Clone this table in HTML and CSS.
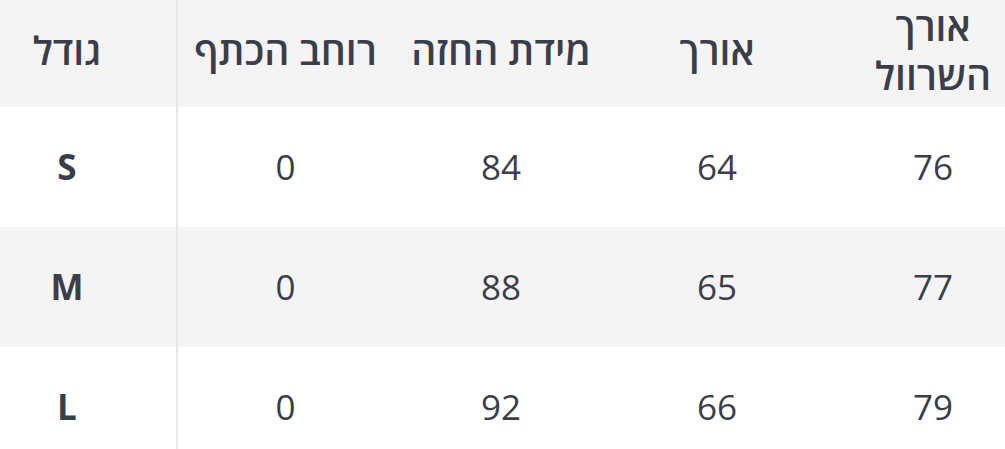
FILE: index.html
```html
<!DOCTYPE html>
<html lang="he">
<head>
<meta charset="utf-8">
<link rel="stylesheet" href="styles.css">
</head>
<body>
<table class="size-table">
  <colgroup>
    <col class="col-size">
    <col class="col-data">
    <col class="col-data">
    <col class="col-data">
    <col class="col-data">
  </colgroup>
  <thead>
    <tr class="row head">
      <th class="cell first" dir="rtl">גודל</th>
      <th class="cell" dir="rtl">רוחב הכתף</th>
      <th class="cell" dir="rtl">מידת החזה</th>
      <th class="cell" dir="rtl">אורך</th>
      <th class="cell" dir="rtl">אורך<br>השרוול</th>
    </tr>
  </thead>
  <tbody>
    <tr class="row">
      <td class="cell first label">S</td>
      <td class="cell">0</td>
      <td class="cell">84</td>
      <td class="cell">64</td>
      <td class="cell">76</td>
    </tr>
    <tr class="row alt">
      <td class="cell first label">M</td>
      <td class="cell">0</td>
      <td class="cell">88</td>
      <td class="cell">65</td>
      <td class="cell">77</td>
    </tr>
    <tr class="row">
      <td class="cell first label">L</td>
      <td class="cell">0</td>
      <td class="cell">92</td>
      <td class="cell">66</td>
      <td class="cell">79</td>
    </tr>
  </tbody>
</table>
</body>
</html>
```

FILE: styles.css
```css
html, body {
  margin: 0;
  padding: 0;
  background: #ffffff;
  overflow: hidden;
}

.size-table {
  width: 1041px;
  table-layout: fixed;
  border-collapse: collapse;
  border-spacing: 0;
  font-family: "Open Sans", "Noto Sans", sans-serif;
  font-size: 35px;
  color: #3a3e4a;
}

.col-size { width: 177px; }
.col-data { width: 216px; }

.row { height: 120px; }
.row.head { height: 107px; background: #f4f4f5; }
.row.alt { background: #f4f4f5; }

.cell {
  padding: 0;
  text-align: center;
  vertical-align: middle;
  font-weight: 400;
  line-height: 42px;
}

.head .cell {
  font-size: 39px;
  font-weight: 600;
  line-height: 49px;
  padding-bottom: 8px;
}

.first {
  padding-right: 42px;
  border-right: 2px solid #e7e7e8;
}

.head .first {
  padding-right: 42px;
}

.label {
  font-weight: 700;
}
```
